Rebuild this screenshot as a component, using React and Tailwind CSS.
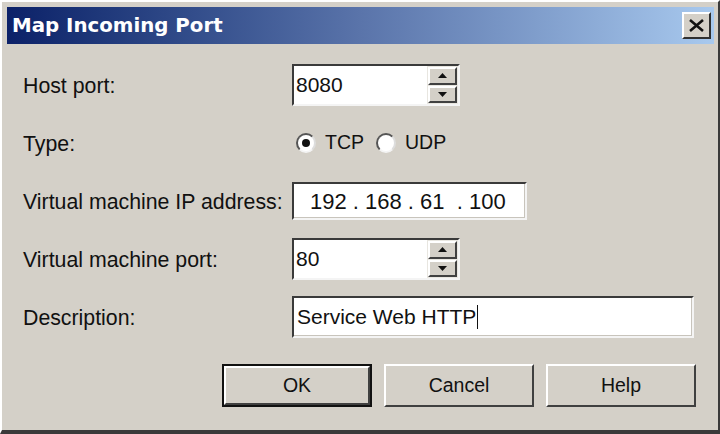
import React from "react";

const font = { fontFamily: '"Liberation Sans", Arial, sans-serif' };

const Sunken = ({ className = "", children }) => (
  <div
    className={`flex items-center bg-white border-2 border-t-[#3a3a3a] border-l-[#3a3a3a] border-b-[#f4f4f4] border-r-[#f4f4f4] shadow-[inset_-1px_-1px_0_#c8c4bc] ${className}`}
  >
    {children}
  </div>
);

const SpinButton = ({ up }) => (
  <div className="flex-1 flex items-center justify-center bg-[#d4d0c8] border-2 border-t-white border-l-white border-b-[#404040] border-r-[#404040]">
    <svg width="9" height="5" viewBox="0 0 9 5">
      {up ? (
        <polygon points="0,5 9,5 4.5,0" fill="#111" />
      ) : (
        <polygon points="0,0 9,0 4.5,5" fill="#111" />
      )}
    </svg>
  </div>
);

const SpinBox = ({ value }) => (
  <div className="flex w-[168px] h-[42px] border-2 border-t-[#3a3a3a] border-l-[#3a3a3a] border-b-[#f4f4f4] border-r-[#f4f4f4] bg-white">
    <div className="flex-1 flex items-center pl-[2px] text-[21px] text-[#111]">{value}</div>
    <div className="w-[31px] flex flex-col p-[1px] gap-[1px] bg-[#e8e6e0]">
      <SpinButton up />
      <SpinButton />
    </div>
  </div>
);

const Radio = ({ checked, label }) => (
  <div className="flex items-center gap-[9px]">
    <div className="w-[20px] h-[20px] rounded-full bg-white border-2 border-t-[#555] border-l-[#555] border-b-[#f4f4f4] border-r-[#ddd] flex items-center justify-center">
      {checked && <div className="w-[8px] h-[8px] rounded-full bg-[#111]" />}
    </div>
    <span className="text-[19.5px] text-[#111]">{label}</span>
  </div>
);

const Button = ({ label, isDefault }) => (
  <div
    className={`w-[150px] h-[43px] flex ${isDefault ? "border-2 border-[#111]" : ""}`}
  >
    <div className="flex-1 flex items-center justify-center bg-[#d4d0c8] border-2 border-t-white border-l-white border-b-[#404040] border-r-[#404040] text-[19.5px] text-[#111]">
      {label}
    </div>
  </div>
);

const Row = ({ label, children }) => (
  <div className="flex items-center h-[42px]">
    <div className="w-[269px] pt-[3px] text-[21.3px] text-[#111]">{label}</div>
    {children}
  </div>
);

export default function App() {
  return (
    <div
      style={font}
      className="w-[720px] h-[434px] bg-[#d4d0c8] border-t-2 border-l-2 border-t-white border-l-white border-r-2 border-b-4 border-r-[#3a3a3a] border-b-[#3a3a3a] flex flex-col overflow-hidden"
    >
      <div className="mt-[5px] ml-[5px] mr-[4px] h-[37px] bg-linear-to-r from-[#0c2168] via-[#5a74aa] to-[#a8c9ee] flex items-center pl-[5px] pr-[3px]">
        <span className="flex-1 pt-[1px] text-white font-bold text-[19.8px]" style={{ fontFamily: '"DejaVu Sans", sans-serif' }}>
          Map Incoming Port
        </span>
        <div className="w-[29px] h-[27px] bg-[#d4d0c8] border-2 border-t-white border-l-white border-b-[#303030] border-r-[#303030] flex items-center justify-center">
          <svg width="15" height="13" viewBox="0 0 15 13">
            <path d="M1 1 L14 12 M14 1 L1 12" stroke="#111" strokeWidth="2.6" />
          </svg>
        </div>
      </div>

      <div className="flex flex-col gap-[16px] pl-[21px] pt-[20px]">
        <Row label="Host port:">
          <SpinBox value="8080" />
        </Row>
        <Row label="Type:">
          <div className="flex items-center gap-[12px] pl-[4px]">
            <Radio checked label="TCP" />
            <Radio label="UDP" />
          </div>
        </Row>
        <Row label="Virtual machine IP address:">
          <Sunken className="w-[235px] h-[38px] pl-[16px] text-[22px] text-[#111] whitespace-pre">
            {"192 . 168 . 61  . 100"}
          </Sunken>
        </Row>
        <Row label="Virtual machine port:">
          <SpinBox value="80" />
        </Row>
        <Row label="Description:">
          <Sunken className="w-[402px] h-[42px] pl-[3px] text-[21px] text-[#111]">
            <span>Service Web HTTP</span>
            <span className="w-[1px] h-[24px] bg-[#111] ml-[1px]" />
          </Sunken>
        </Row>
      </div>

      <div className="flex gap-[12px] pl-[220px] pt-[26px]">
        <Button label="OK" isDefault />
        <Button label="Cancel" />
        <Button label="Help" />
      </div>
    </div>
  );
}
